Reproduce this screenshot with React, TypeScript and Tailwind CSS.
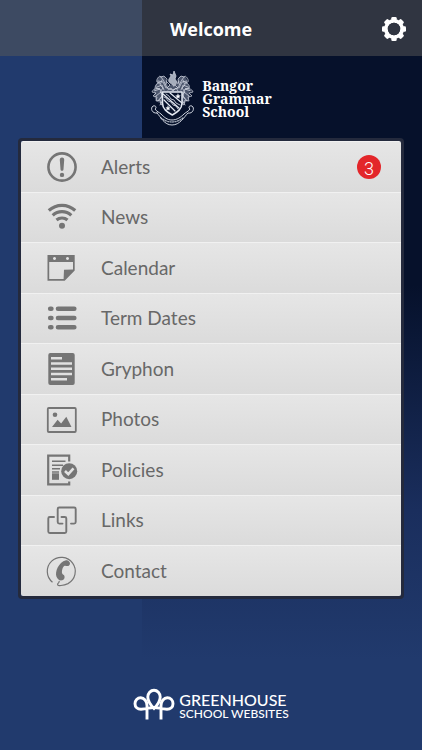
import type { ReactNode } from "react";

function AlertIcon() {
  return (
    <svg viewBox="0 0 32 32" className="size-8" fill="currentColor" aria-hidden="true">
      <circle cx="16" cy="16" r="13.6" fill="none" stroke="currentColor" strokeWidth="2.6" />
      <path d="M16 6.5c1.6 0 2.3 1 2.2 2.4l-.7 9.4c-.1 1-.6 1.500-1.500 1.500s-1.400-.5-1.500-1.500l-.7-9.400c-.1-1.400.6-2.400 2.200-2.400z" />
      <circle cx="16" cy="23.900" r="2.200" />
    </svg>
  );
}

function NewsIcon() {
  return (
    <svg viewBox="0 0 32 32" className="size-8" fill="none" stroke="currentColor" strokeWidth="3.2" aria-hidden="true">
      <path d="M2.800 9.500Q8.500 4.300 16 4.300t13.200 5.200" />
      <path d="M6.700 14.400Q10.700 10.700 16 10.700t9.300 3.700" />
      <path d="M10.500 19Q12.800 17 16 17t5.500 2" />
      <circle cx="16" cy="24.700" r="3" fill="currentColor" stroke="none" />
    </svg>
  );
}

function CalendarIcon() {
  return (
    <svg viewBox="0 0 32 32" className="size-8" aria-hidden="true">
      <path
        fill="currentColor"
        fillRule="evenodd"
        d="M1.500 3h27.200v15.500L18.700 28.800H1.500zM3.200 10v17h14.400l.4-9.300 9-.1V10zM8.500 5a1.500 1.500 0 1 0 .01 0zM21.500 5a1.500 1.500 0 1 0 .01 0z"
      />
    </svg>
  );
}

function ListIcon() {
  return (
    <svg viewBox="0 0 32 32" className="size-8" stroke="currentColor" strokeWidth="4.600" strokeLinecap="round" aria-hidden="true">
      <path d="M4.200 6.700h1.200M12 6.700h16.300M4.200 16h1.200M12 16h16.300M4.200 25.200h1.200M12 25.200h16.300" />
    </svg>
  );
}

function PageIcon() {
  return (
    <svg viewBox="0 0 32 32" className="size-8" aria-hidden="true">
      <rect x="2.300" y="0" width="26.400" height="32" rx="2" fill="currentColor" />
      <path d="M5 5.200h11M5 10.500h21M5 15.700h21M5 21h21M5 26.300h16" stroke="#e0e0e0" strokeWidth="2.400" />
    </svg>
  );
}

function PhotoIcon() {
  return (
    <svg viewBox="0 0 32 32" className="size-8" fill="currentColor" aria-hidden="true">
      <rect x="1.800" y="4" width="28" height="24" rx="1" fill="none" stroke="currentColor" strokeWidth="1.800" />
      <circle cx="9" cy="10.700" r="2.300" />
      <path d="M6 23l5.600-7.200 3.500 3.600 5.200-6.600L25.500 23z" />
    </svg>
  );
}

function PolicyIcon() {
  return (
    <svg viewBox="0 0 32 32" className="size-8" fill="none" stroke="currentColor" aria-hidden="true">
      <path d="M23.200 7.500V1.600H2.200v28.800h21v-3" strokeWidth="2.200" />
      <path d="M6 7.200h13.500M6 11.200h11M6 14.700h8M6 18h7" strokeWidth="1.500" />
      <rect x="6" y="19.300" width="7" height="6.500" fill="currentColor" stroke="none" />
      <circle cx="23.200" cy="17.200" r="8" fill="currentColor" stroke="none" />
      <path d="M19 17l3.300 3.200 5.200-5.900" stroke="#e2e2e2" strokeWidth="2.600" />
    </svg>
  );
}

function LinksIcon() {
  return (
    <svg viewBox="0 0 32 32" className="size-8" fill="none" stroke="currentColor" strokeWidth="1.900" strokeLinecap="round" strokeLinejoin="round" aria-hidden="true">
      <path d="M8 12H3.800Q2.300 12 2.300 13.500v13Q2.300 28 3.800 28h15q1.500 0 1.500-1.500v-13Q20.300 12 18.800 12h-3.300" />
      <path d="M16.500 18.600h-3.300q-1.500 0-1.500-1.500V4q0-1.500 1.500-1.500h15q1.500 0 1.500 1.500v13.100q0 1.500-1.500 1.500H25" />
    </svg>
  );
}

function ContactIcon() {
  return (
    <svg viewBox="0 0 32 32" className="size-8" aria-hidden="true">
      <path
        d="M6.500 27.200A14 14 0 1 1 22 28.600c-4.500 2.200-10.800 2.600-10.500.8.200-1.500 2-1.200 1.700-3.500"
        fill="none"
        stroke="currentColor"
        strokeWidth="1.200"
      />
      <path
        fill="currentColor"
        d="M20 5.300c1.500-.6 3.200.6 3.800 2.300.5 1.600-.1 2.700-1.400 3.300-1.700.7-2.900-.6-4.100.1-1.800 1-2.900 5.500-2.100 7.600.5 1.300 2 .9 2.300 2.700.4 2-.5 3.600-2.300 4-2.300.5-4.600-.8-5.700-3.600C8.700 17.300 12.300 7.300 20 5.300z"
      />
    </svg>
  );
}

const items: { label: string; icon: ReactNode; count?: number }[] = [
  { label: "Alerts", icon: <AlertIcon />, count: 3 },
  { label: "News", icon: <NewsIcon /> },
  { label: "Calendar", icon: <CalendarIcon /> },
  { label: "Term Dates", icon: <ListIcon /> },
  { label: "Gryphon", icon: <PageIcon /> },
  { label: "Photos", icon: <PhotoIcon /> },
  { label: "Policies", icon: <PolicyIcon /> },
  { label: "Links", icon: <LinksIcon /> },
  { label: "Contact", icon: <ContactIcon /> },
];

function GearIcon() {
  return (
    <svg viewBox="0 0 24 24" className="size-6" aria-hidden="true">
      {[0, 45, 90, 135].map((angle) => (
        <g key={angle} transform={`rotate(${angle} 12 12)`} fill="#fff">
          <rect x="9.300" y="0" width="5.400" height="5" rx="1.300" />
          <rect x="9.300" y="19" width="5.400" height="5" rx="1.300" />
        </g>
      ))}
      <circle cx="12" cy="12" r="8.100" fill="none" stroke="#fff" strokeWidth="3.800" />
      <circle cx="12" cy="12" r="6.200" fill="#303541" />
    </svg>
  );
}

function Crest() {
  return (
    <svg viewBox="0 0 44 58" className="h-[58px] w-11" fill="none" stroke="#e4e9f2" strokeLinecap="round" strokeLinejoin="round" aria-hidden="true">
      <path d="M15 8C10 5 6 9 7 14c-3 3-4 7-2 10-2 4 1 9 5 10l3 4V24h18v14l3-4c4-1 7-6 5-10 2-3 1-7-2-10 1-5-3-9-8-6l-3 9-4-2-4 2z" fill="#4c566d" stroke="none" />
      <g strokeWidth=".8" opacity=".85">
        <path d="M22 15c-3-1-4-3-3-5l2-3-1-2 3 1 1-4 2 5-1 3 2 3-3 4z" fill="#c3cad7" />
        <path d="M17 19c-2-4-3-8-7-12-2 1-4 4-3 6l3 1c-3 0-5 2-4 5l4 1c-4-1-7 0-8 3l4 1-3 3 4 1-1 4 4-1 1 5 3-2" />
        <path d="M28 19c2-4 3-8 7-12 2 1 4 4 3 6l-3 1c3 0 5 2 4 5l-4 1c4-1 7 0 8 3l-4 1 3 3-4 1 1 4-4-1-1 5-3-2" />
        <path d="M11 8l3-1 3 3-1 5M8 12l5 1 3 6M7 18l5-2 2 5M4 22l6-2 2 4M6 27l5-4 1 6M8 32l4-5M10 36l3-5M12 11l-2 5 3 3-3 4 3 3-3 4" />
        <path d="M34 8l-3-1-3 3 1 5M37 12l-5 1-3 6M38 18l-5-2-2 5M41 22l-6-2-2 4M39 27l-5-4-1 6M37 32l-4-5M35 36l-3-5M33 11l2 5-3 3 3 4-3 3 3 4" />
        <path d="M17 13l3 3-3 3 5 2 6-2-3-3 4-3M18 21l3-2 2 3 3-3 2 3" />
      </g>
      <path d="M12.500 23h19.500v11c0 6-4.500 9-9.700 12-5.300-3-9.800-6-9.800-12z" fill="#06112b" strokeWidth="1.500" />
      <path d="M13 25l16 14M14 31l11 11M20 24l12 10" strokeWidth="1.200" />
      <path d="M14 28l2 1 2 3 3 1 2 3 3 1 2 3M16 25l3 2 2 3 3 1 2 3 4 2" strokeWidth=".8" />
      <path d="M28 25l.7 1.500 1.600.2-1.200 1 .3 1.600-1.400-.8-1.400.8.3-1.600-1.200-1 1.600-.2zM18 37l.7 1.400 1.500.2-1.100 1 .3 1.500-1.400-.7-1.400.7.3-1.500-1.100-1 1.500-.2z" fill="#fff" strokeWidth=".4" />
      <g strokeWidth=".9">
        <path d="M7 44c-5 1-7-5-4-7 3-1 4 2 2 3 2 3 4 3 6 5 3 3 6 6 11 6s9-3 12-6c2-2 4-2 6-5-2-1-1-4 2-3 3 2 1 8-4 7-4 4-8 12-16 12S11 48 7 44z" fill="#06112b" />
        <path d="M11 49q11 8 22 0" strokeWidth="1.400" strokeDasharray="1 1.500" opacity=".7" />
      </g>
    </svg>
  );
}

function TreesLogo() {
  return (
    <svg viewBox="0 0 42 32" className="h-8 w-[42px]" fill="none" stroke="#fff" strokeWidth="2.900" aria-hidden="true">
      <path d="M14 31.500V17.500C14 13 11 9.800 7.700 9.800S2 12.500 2 15.800s2.400 5.500 6 5.500c5.500 0 10-2.300 13-1.800 3-.5 7.500 1.800 13 1.800 3.600 0 6-2.200 6-5.500s-2.400-6-5.700-6S28 13 28 17.500v14" />
      <path d="M21 20.500C17.500 17 14.800 13 14.800 9a6.200 6.800 0 1 1 12.400 0c0 4-2.700 8-6.200 11.500z" />
    </svg>
  );
}

export default function App() {
  return (
    <main className="flex min-h-screen flex-col bg-[#213a6d] bg-[linear-gradient(to_bottom,#06112b_0%,#06112b_38%,#1a2e5d_68%,#213a6d_88%)] bg-no-repeat bg-[position:142px_0] font-[Lato,sans-serif]">
      <header className="grid h-14 grid-cols-[1fr_auto_1fr] items-center bg-[#5a5957]/50 px-4 pt-0.5">
        <h1 className="col-start-2 font-['Open_Sans',sans-serif] text-lg font-bold text-white">Welcome</h1>
        <button type="button" aria-label="Settings" className="justify-self-end">
          <GearIcon />
        </button>
      </header>

      <div className="flex h-[82px] items-center justify-center gap-2 pt-0.5">
        <Crest />
        <p className="font-['Noto_Serif','DejaVu_Serif',serif] text-sm leading-[13px] font-bold text-white">
          Bangor
          <br />
          Grammar
          <br />
          School
        </p>
      </div>

      <nav aria-label="Main" className="mx-[18px] rounded-sm border-3 border-[#242a3d]">
        <ul className="grid h-[455px] auto-rows-fr overflow-hidden rounded-xs">
          {items.map((item) => (
            <li key={item.label} className="border-t border-[#f1f1f1] bg-linear-to-b from-[#e6e6e6] to-[#dbdbdb]">
              <a href="#" className="flex h-full items-center pr-5 pl-[25px] text-[#757575]">
                {item.icon}
                <span className="ml-[23px] text-[19px] text-[#686868]">{item.label}</span>
                {item.count && (
                  <span className="ml-auto grid size-6 place-items-center rounded-full bg-[#e3262a] font-['Roboto',sans-serif] text-lg font-light text-white">
                    {item.count}
                  </span>
                )}
              </a>
            </li>
          ))}
        </ul>
      </nav>

      <footer className="mt-auto flex items-end justify-center gap-1 pb-[30px] text-white">
        <TreesLogo />
        <div className="font-medium">
          <p className="text-base leading-[14px]">GREENHOUSE</p>
          <p className="text-xs leading-[13px]">SCHOOL WEBSITES</p>
        </div>
      </footer>
    </main>
  );
}
